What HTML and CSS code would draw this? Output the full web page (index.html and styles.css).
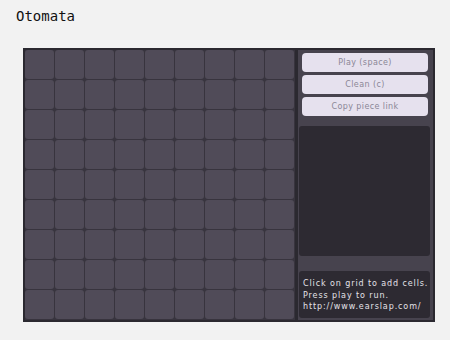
FILE: index.html
```html
<!DOCTYPE html>
<html lang="en">
<head>
    <meta charset="UTF-8">
    <title>Otomata</title>
    <link rel="stylesheet" href="styles.css">
</head>
<body>
    <h1 class="title">Otomata</h1>

    <div class="app">
        <div class="grid" id="grid"></div>

        <div class="sidebar">
            <div class="controls">
                <button class="ctrl-btn">Play (space)</button>
                <button class="ctrl-btn">Clean (c)</button>
                <button class="ctrl-btn">Copy piece link</button>
            </div>
            <div class="display"></div>
            <div class="info">
                Click on grid to add cells.<br>
                Press play to run.<br>
                http://www.earslap.com/
            </div>
        </div>
    </div>

    <script>
        const grid = document.getElementById('grid');
        for (let i = 0; i < 81; i++) {
            const cell = document.createElement('div');
            cell.className = 'cell';
            grid.appendChild(cell);
        }
    </script>
</body>
</html>
```

FILE: styles.css
```css
:root {
    --frame: #2b2930;
    --cell: #504b58;
    --line: #38343e;
    --panel: #47434e;
    --screen: #2d2a32;
    --button: #e6e1ee;
}

body {
    margin: 0;
    background: #f2f2f2;
    font-family: 'DejaVu Sans', Verdana, sans-serif;
}

.title {
    margin: 8px 0 0 16px;
    font-family: 'DejaVu Sans Mono', monospace;
    font-size: 14px;
    font-weight: normal;
    line-height: 17px;
    color: #111;
}

.app {
    display: flex;
    width: 408px;
    margin: 23px 0 0 23px;
    border: 2px solid var(--frame);
    background: var(--frame);
}

.grid {
    display: grid;
    grid-template-columns: repeat(9, 29px);
    grid-auto-rows: 29px;
    gap: 1px;
    padding: 0 1px 1px 0;
    background: var(--line);
}

.cell {
    background: var(--cell);
    border-radius: 3px;
}

.sidebar {
    width: 135px;
    margin-left: 3px;
    padding: 3px 3px 2px 1px;
    box-sizing: border-box;
    background: var(--panel);
}

.controls {
    display: flex;
    flex-direction: column;
    gap: 3px;
    padding: 0 2px 0 3px;
}

.ctrl-btn {
    height: 19px;
    padding: 0;
    border: none;
    border-radius: 4px;
    background: var(--button);
    color: #8b8796;
    font-family: 'DejaVu Sans', Verdana, sans-serif;
    font-size: 8px;
    letter-spacing: 0.4px;
}

.display {
    height: 130px;
    margin-top: 10px;
    border-radius: 3px;
    background: var(--screen);
}

.info {
    height: 47px;
    margin-top: 15px;
    padding: 7px 4px 0;
    box-sizing: border-box;
    border-radius: 3px;
    background: var(--screen);
    color: #e4e2e8;
    font-size: 8px;
    letter-spacing: 0.9px;
    line-height: 11.5px;
    white-space: nowrap;
}
```
